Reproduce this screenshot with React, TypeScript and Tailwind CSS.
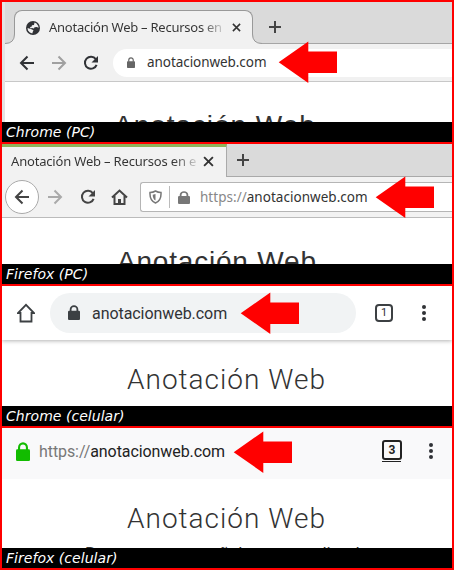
import type { ReactNode } from 'react';

const ubuntu = "font-['Noto_Sans','Open_Sans',sans-serif]";

function Panel({ caption, children }: { caption: string; children: ReactNode }) {
  return (
    <section className="flex h-[140px] flex-col overflow-hidden bg-white">
      <div className="relative h-[120px] overflow-hidden">{children}</div>
      <div className="h-5 bg-black pl-1 font-['DejaVu_Sans',sans-serif] text-[14px] leading-5 tracking-[0.040px] text-white italic">
        {caption}
      </div>
    </section>
  );
}

function Arrow() {
  return (
    <svg width="60" height="43" viewBox="0 0 60 43" className="shrink-0" fill="#ff0000">
      <path d="M.7 21.200 30.300.5V10.500H59V32H30.300V42Z" />
    </svg>
  );
}

function Lock({ className }: { className: string }) {
  return (
    <svg viewBox="0 0 16 21" preserveAspectRatio="none" className={className}>
      <path d="M3.500 9V6a4.500 4.500 0 0 1 9 0v3" fill="none" stroke="currentColor" strokeWidth="2.400" />
      <rect x="0" y="8" width="16" height="13" rx="1.500" fill="currentColor" />
    </svg>
  );
}

function BackArrow({ className }: { className: string }) {
  return (
    <svg viewBox="0 0 16 16" className={className} fill="none" stroke="currentColor" strokeWidth="2">
      <path d="M15 8H2M8.500 1.500 2 8l6.500 6.500" />
    </svg>
  );
}

function Reload({ className }: { className: string }) {
  return (
    <svg viewBox="0 0 16 16" className={className}>
      <path d="M12.800 4.200A6 6 0 1 0 13.600 9.800" fill="none" stroke="currentColor" strokeWidth="2" />
      <path d="M15 1v6.500H8.500Z" fill="currentColor" />
    </svg>
  );
}

function Globe() {
  return (
    <svg width="14" height="14" viewBox="0 0 14 14">
      <circle cx="7" cy="7" r="7" fill="#303236" />
      <path d="M8.500 1.500 10.500 2.500 12.300 5 12.500 7 11 6 8.500 6.300 8 7.500 6 7 4.500 7.500 4 6 5.500 5.700 6 4.200 8 4Z" fill="#f1f1f1" />
      <path d="M1.500 7 5.500 8.200 7.500 9.300 6.800 10.800 6.300 12.500 3.800 11.500 2 9.500Z" fill="#f1f1f1" />
    </svg>
  );
}

function Plus() {
  return (
    <svg width="14" height="14" viewBox="0 0 14 14" stroke="#444" strokeWidth="2">
      <path d="M7 1v12M1 7h12" />
    </svg>
  );
}

function Cross({ className }: { className: string }) {
  return (
    <svg viewBox="0 0 10 10" className={className} stroke="currentColor" strokeWidth="1.700">
      <path d="m1 1 8 8M9 1 1 9" />
    </svg>
  );
}

function Dots() {
  return (
    <div className="flex flex-col gap-[2px]">
      <i className="size-1 rounded-full bg-[#303236]" />
      <i className="size-1 rounded-full bg-[#303236]" />
      <i className="size-1 rounded-full bg-[#303236]" />
    </div>
  );
}

function ChromeDesktop() {
  return (
    <Panel caption="Chrome (PC)">
      <div className="flex h-full flex-col border-l-[3px] border-[#e4e4e4]">
        <div className="flex h-[42px] shrink-0 items-end border-b border-[#a5a5a5] bg-[#dadada]">
          <div className="relative -mb-px ml-[9px] flex h-[34px] w-[239px] items-center rounded-t-[8px] border border-b-0 border-[#999] bg-[#f1f1f1] pl-[11px]">
            <svg className="absolute bottom-0 -left-[10px]" width="10" height="10" viewBox="0 0 10 10">
              <path d="M0 9.500Q9.500 9.500 9.500 0H10V10H0Z" fill="#f1f1f1" />
              <path d="M0 9.500Q9.500 9.500 9.500 0" fill="none" stroke="#999" />
            </svg>
            <svg className="absolute -right-[10px] bottom-0" width="10" height="10" viewBox="0 0 10 10">
              <path d="M10 9.500Q.5 9.500 .5 0H0V10H10Z" fill="#f1f1f1" />
              <path d="M10 9.500Q.5 9.500 .5 0" fill="none" stroke="#999" />
            </svg>
            <Globe />
            <span className={`${ubuntu} ml-[9px] w-[178px] overflow-hidden bg-linear-to-r from-[#333] from-85% to-[#f1f1f1] bg-clip-text text-[13px] tracking-[-0.250px] whitespace-nowrap text-transparent`}>
              Anotación Web – Recursos en
            </span>
            <Cross className="ml-[5px] size-[9px] text-[#333]" />
          </div>
          <div className="mb-[9px] ml-[15px]"><Plus /></div>
        </div>
        <div className="flex h-[38px] shrink-0 items-center border-b border-[#c8c8c8] bg-[#f1f1f1] pl-[14px]">
          <BackArrow className="size-4 text-[#303236]" />
          <BackArrow className="ml-[16px] size-4 rotate-180 text-[#a0a0a0]" />
          <Reload className="ml-[16px] size-4 text-[#303236]" />
          <div className="ml-[14px] flex h-[28px] flex-1 items-center rounded-l-full bg-white pl-[14px]">
            <Lock className="h-[11px] w-[8px] text-[#666]" />
            <span className={`${ubuntu} ml-[12px] w-[131px] text-[13.500px] tracking-[-0.060px] whitespace-nowrap text-[#333]`}>anotacionweb.com</span>
            <Arrow />
          </div>
        </div>
        <h1 className="mt-[26px] ml-[109px] font-['Liberation_Sans',sans-serif] text-[28px] leading-9 tracking-[0.950px] whitespace-nowrap text-[#333]">
          Anotación Web
        </h1>
      </div>
    </Panel>
  );
}

function FirefoxDesktop() {
  return (
    <Panel caption="Firefox (PC)">
      <div className="flex h-[33px] border-b border-[#a9a9a9] bg-[#dadada]">
        <div className="flex h-[33px] w-[225px] items-center border-t-[3px] border-r border-t-[#8fb35a] border-r-[#aaa] bg-[#f2f2f2] pl-[9px]">
          <span className={`${ubuntu} w-[190px] overflow-hidden bg-linear-to-r from-[#333] from-85% to-[#f2f2f2] bg-clip-text text-[13px] tracking-[-0.180px] whitespace-nowrap text-transparent`}>
            Anotación Web – Recursos en e
          </span>
          <Cross className="mb-px ml-[2px] size-[11px] text-[#333]" />
        </div>
        <div className="flex items-center pl-[9px]"><Plus /></div>
      </div>
      <div className="flex h-[41px] items-center border-b border-[#bbb] bg-[#f2f2f2] pl-[3px]">
        <div className="flex size-[34px] items-center justify-center rounded-full border border-[#aaa] bg-white">
          <BackArrow className="size-4 text-[#444]" />
        </div>
        <BackArrow className="ml-[8px] size-4 rotate-180 text-[#aaa]" />
        <Reload className="ml-[17px] size-4 text-[#444]" />
        <svg className="ml-[15px]" width="17" height="17" viewBox="0 0 17 17">
          <path d="m1 8.500 7.500-7 7.500 7M3.500 7v8h10V7" fill="none" stroke="#444" strokeWidth="2" />
          <path d="M7 15v-5h3v5" fill="#444" />
        </svg>
        <div className="ml-[12px] flex h-[30px] flex-1 items-center rounded-l-[3px] border border-r-0 border-[#b5b5b5] bg-white pl-[8px]">
          <svg width="13" height="14" viewBox="0 0 13 14">
            <path d="M1 2.500Q4 2.500 6.500 1 9 2.500 12 2.500 12.500 10.500 6.500 13 .5 10.500 1 2.500Z" fill="none" stroke="#777" strokeWidth="1.500" />
            <path d="M6.500 4v6.500Q3.700 9 3.700 4.700Z" fill="#777" />
          </svg>
          <div className="mx-[7px] h-[22px] w-px bg-[#bbb]" />
          <Lock className="ml-px h-[13px] w-[12px] text-[#777]" />
          <span className={`${ubuntu} ml-[10px] w-[175px] text-[13.500px] tracking-[0.030px] whitespace-nowrap text-[#333]`}>
            <span className="text-[#888]">https://</span>anotacionweb.com
          </span>
          <Arrow />
        </div>
      </div>
      <h1 className="mt-[26px] ml-[115px] font-['Liberation_Sans',sans-serif] text-[28px] leading-9 tracking-[0.800px] whitespace-nowrap text-[#333]">
        Anotación Web
      </h1>
    </Panel>
  );
}

function ChromeMobile() {
  return (
    <Panel caption="Chrome (celular)">
      <div className="flex h-[54px] items-center pl-[15px] shadow-[0_1px_4px_rgba(0,0,0,0.300)]">
        <svg width="18" height="20" viewBox="0 0 18 20" fill="none" stroke="#3c4043" strokeWidth="1.800">
          <path d="M3.500 18.500V10H1L9 1.800 17 10H14.500V18.500Z" />
        </svg>
        <div className="ml-[15px] flex h-10 w-[306px] items-center rounded-full bg-[#f1f3f4] pl-[18px]">
          <Lock className="mb-px h-[15px] w-[12px] text-[#3c4043]" />
          <span className="mt-px ml-[12px] w-[148px] font-['Roboto',sans-serif] text-[16px] tracking-[-0.060px] whitespace-nowrap text-[#303236]">anotacionweb.com</span>
          <Arrow />
        </div>
        <div className="ml-[19px] flex size-[18px] items-center justify-center rounded-[4px] border-2 border-[#3c4043] font-['Roboto',sans-serif] text-[11px] text-[#303236]">1</div>
        <div className="ml-[29px]"><Dots /></div>
      </div>
      <h1 className="mt-[22px] ml-[125px] font-['Roboto',sans-serif] text-[28px] leading-9 font-light tracking-[1px] whitespace-nowrap text-[#333]">
        Anotación Web
      </h1>
    </Panel>
  );
}

function FirefoxMobile() {
  return (
    <Panel caption="Firefox (celular)">
      <div className="flex h-[51px] bg-[#f9f9fa] pl-[14px]">
        <Lock className="mt-[14px] h-[19px] w-[14px] text-[#12bc00]" />
        <span className="mt-[12px] ml-[9px] w-[194px] font-['Roboto',sans-serif] text-[16px] tracking-[-0.080px] whitespace-nowrap text-[#222]">
          <span className="text-[#777]">https://</span>anotacionweb.com
        </span>
        <div className="mt-[3px]"><Arrow /></div>
        <div className="mt-[12px] ml-[89px] h-[22px] w-[19px] border-b border-[#222]">
          <div className="flex size-[20px] items-center justify-center rounded-[3px] border-2 border-[#222] font-['Roboto',sans-serif] text-[12px] font-bold text-[#222]">3</div>
        </div>
        <div className="mt-[15px] ml-[28px]"><Dots /></div>
      </div>
      <div className="h-[69px] bg-white">
        <h1 className="pt-[22px] pl-[125px] font-['Roboto',sans-serif] text-[28px] leading-9 font-light tracking-[1px] whitespace-nowrap text-[#333]">
          Anotación Web
        </h1>
        <p className="mt-[6px] pl-[83px] font-['Roboto',sans-serif] text-[17px] leading-5 whitespace-nowrap text-[#333]">
          Recursos en español para estudiar de
        </p>
      </div>
    </Panel>
  );
}

export default function App() {
  return (
    <main className="flex h-[570px] w-[454px] flex-col gap-[2px] bg-[#ff0000] p-[2px]">
      <ChromeDesktop />
      <FirefoxDesktop />
      <ChromeMobile />
      <FirefoxMobile />
    </main>
  );
}
